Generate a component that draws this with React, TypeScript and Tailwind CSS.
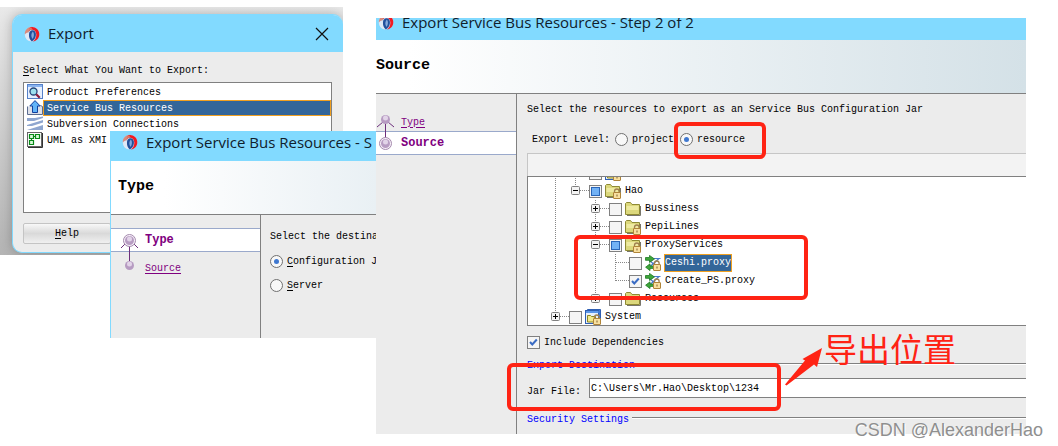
import { useState } from 'react';
import type { ReactNode } from 'react';
import clsx from 'clsx';

type IconName = 'folder' | 'lockedFolder' | 'project' | 'proxy';

interface TreeRow {
  label: string;
  // one entry per indent column: draw the dotted guide or leave it blank
  guides: boolean[];
  toggle?: 'plus' | 'minus';
  last?: boolean;
  check: 'off' | 'on' | 'partial';
  icon: IconName;
  selected?: boolean;
}

const rows: TreeRow[] = [
  { label: '\u00a0\u00a0_', guides: [true], check: 'off', icon: 'project' },
  { label: 'Hao', guides: [true], toggle: 'minus', last: true, check: 'partial', icon: 'lockedFolder' },
  { label: 'Bussiness', guides: [true, false], toggle: 'plus', check: 'off', icon: 'folder' },
  { label: 'PepiLines', guides: [true, false], toggle: 'plus', check: 'off', icon: 'lockedFolder' },
  { label: 'ProxyServices', guides: [true, false], toggle: 'minus', check: 'partial', icon: 'lockedFolder' },
  { label: 'Ceshi.proxy', guides: [true, false, true], check: 'off', icon: 'proxy', selected: true },
  { label: 'Create_PS.proxy', guides: [true, false, true], last: true, check: 'on', icon: 'proxy' },
  { label: 'Resources', guides: [true, false], toggle: 'plus', last: true, check: 'off', icon: 'folder' },
  { label: 'System', guides: [], toggle: 'plus', last: true, check: 'off', icon: 'project' },
];

const exportKinds = ['Product Preferences', 'Service Bus Resources', 'Subversion Connections', 'UML as XMI'];

function AppLogo() {
  return (
    <svg width="16" height="16" viewBox="0 0 16 16" className="shrink-0">
      <circle cx="8" cy="8.200" r="7.300" fill="#c9d8ee" />
      <path d="M.8 8.500C.6 4 4 .8 8.200.8L9 3C6.500 3.200 5.200 4.500 4.600 6.200 3 6.500 1.600 7.300.8 8.500Z" fill="#d98a7c" />
      <path d="M1 9C1.800 7.600 3.200 6.800 4.800 6.800 4.600 10 5.500 13 8 15.500 4 15.400 1.200 12.800 1 9Z" fill="#dfe9f6" />
      <path d="M5 8C5.300 5.200 7 4 9 4.300c2.200.4 3.200 2.500 2.900 5-.3 2.600-1.800 5-4 6.200C5.600 13.500 4.700 11 5 8Z" fill="#22509c" />
      <path d="M8.800 5.500c1.600 1.500 1.600 5.200-.3 7.500C6.800 10.600 7 7.500 8.800 5.500Z" fill="#86a9dc" />
      <path d="M7 1C11 .3 15.300 3.400 15.300 8.200c0 4-2.800 6.700-6.300 7.400 2.300-1.900 3.500-4.500 3.300-7.300C12.100 5.500 10.500 3.800 8 3.700 6.700 3.700 5.800 4.200 5 5 5 3.300 5.700 1.800 7 1Z" fill="#f01a22" />
      <path d="M7.200 1.300C5.500 2 4.600 3.500 4.600 5.400 5.600 4 7 3.500 8.600 3.700 8 2.800 7.500 2 7.200 1.300Z" fill="#dd7768" />
    </svg>
  );
}

function Lock() {
  return (
    <g>
      <path d="M9.500 10V8.300a2.300 2.300 0 0 1 4.600 0V10" fill="none" stroke="#a08050" strokeWidth="1.300" />
      <rect x="8.500" y="9.500" width="7" height="6" rx=".5" fill="#f8e0a0" stroke="#b08438" />
      <path d="M12 11.500v2" stroke="#80602a" />
    </g>
  );
}

function TreeIcon({ name }: { name: IconName }) {
  if (name === 'proxy') {
    return (
      <svg width="16" height="16" viewBox="0 0 16 16" className="shrink-0">
        <path d="M6 3.500h9.500M14 3.500 4 12.500M4 5l8 7" stroke="#4a78c8" strokeWidth="1.200" fill="none" />
        <path d="M.5 2.500h4V.4L9.500 4 4.500 7.400V5.300h-4Z" fill="#3fa53a" stroke="#1e7a22" strokeWidth=".8" />
        <path d="M8.500 11H5V8.800L.6 12.200 5 15.600v-2.200h3.500Z" fill="#3fa53a" stroke="#1e7a22" strokeWidth=".8" />
        <Lock />
      </svg>
    );
  }
  if (name === 'project') {
    return (
      <svg width="16" height="16" viewBox="0 0 16 16" className="shrink-0">
        <path d="M2.500 1.500V.5h13v13h-1" fill="#3d7ad6" stroke="#2f5fb3" />
        <rect x=".5" y="1.500" width="13" height="13" fill="#e6effc" stroke="#2f5fb3" />
        <path d="M1 2h12.500v2H1Z" fill="#5b96e8" />
        <path d="M2.500 6.500h3l1 1h4v5.500h-8Z" fill="#f2e98a" stroke="#8a8423" />
        <Lock />
      </svg>
    );
  }
  return (
    <svg width="16" height="16" viewBox="0 0 16 16" className="shrink-0">
      <path d="M15.500 5v9.500H2" stroke="#77756a" fill="none" />
      <path d="M.5 13.500V2.500l1-1h4l1.500 2h7.500v10Z" fill="#dcd87c" stroke="#8f8a35" />
      <path d="M1.500 5h12v4h-12Z" fill="#eeeaa0" />
      {name === 'lockedFolder' && <Lock />}
    </svg>
  );
}

function CheckBox({ id, state }: { id: string; state: 'off' | 'on' | 'partial' }) {
  const [checked, setChecked] = useState(state === 'on');
  return (
    <span className="grid size-[13px] shrink-0">
      <input
        id={id}
        type="checkbox"
        checked={checked}
        onChange={e => setChecked(e.target.checked)}
        className="col-start-1 row-start-1 size-[13px] appearance-none border border-[#808080] bg-[#f5f5f5]"
      />
      <svg viewBox="0 0 13 13" className="pointer-events-none col-start-1 row-start-1 size-[13px]">
        {checked && <path d="M3 6 5.300 8.500 9.800 3.500" fill="none" stroke="#3a6cc4" strokeWidth="2" />}
        {!checked && state === 'partial' && (
          <rect x="2.500" y="2.500" width="8" height="8" fill="#72b2f5" stroke="#2a66b8" />
        )}
      </svg>
    </span>
  );
}

function Radio({ name, label, mnemonic, on }: { name: string; label: string; mnemonic?: boolean; on?: boolean }) {
  return (
    <label className="flex items-center gap-1 whitespace-nowrap">
      <span className="grid size-[13px] shrink-0 place-items-center">
        <input
          type="radio"
          name={name}
          defaultChecked={on}
          className="peer col-start-1 row-start-1 size-[13px] appearance-none rounded-full border border-[#707070] bg-[#f8f8f8]"
        />
        <span className="pointer-events-none col-start-1 row-start-1 hidden size-[5px] rounded-full bg-[#3f78d0] peer-checked:block" />
      </span>
      {mnemonic ? <Mnemonic text={label} /> : <span>{label}</span>}
    </label>
  );
}

function Mnemonic({ text }: { text: string }) {
  return (
    <span>
      <span className="underline underline-offset-2">{text[0]}</span>
      {text.slice(1)}
    </span>
  );
}

function Branch({ toggle, last }: { toggle?: 'plus' | 'minus'; last?: boolean }) {
  return (
    <svg width="20" height="18" viewBox="0 0 20 18" className="mr-1 shrink-0 overflow-visible">
      <path d={last ? 'M10.500 0V9' : 'M10.500 0V18'} stroke="#888" strokeDasharray="1 1" />
      <path d="M11 8.500H24" stroke="#888" strokeDasharray="1 1" />
      {toggle && (
        <g>
          <rect x="6.500" y="4.500" width="8" height="8" rx="1" fill="#f4f4f4" stroke="#808080" />
          <path d={toggle === 'plus' ? 'M8 8.500h5M10.500 6v5' : 'M8 8.500h5'} stroke="#000" />
        </g>
      )}
    </svg>
  );
}

function ResourceTree() {
  return (
    <div className="h-[150px] overflow-hidden border border-r-0 border-[#808080] bg-white">
      <ul className="-mt-[13px] pl-[17px]">
        {rows.map((row, i) => (
          <li key={i} className="flex h-[18px] items-center">
            {row.guides.map((line, col) => (
              <svg key={col} width="20" height="18" className="shrink-0">
                {line && <path d="M10.500 0V18" stroke="#888" strokeDasharray="1 1" />}
              </svg>
            ))}
            <Branch toggle={row.toggle} last={row.last} />
            <CheckBox id={`node-${i}`} state={row.check} />
            <span className="ml-[3px] flex">
              <TreeIcon name={row.icon} />
            </span>
            <label
              htmlFor={`node-${i}`}
              className={clsx(
                'ml-[3px] border leading-4',
                row.selected ? 'border-[#f0a020] bg-[#336699] text-white' : 'border-transparent',
              )}
            >
              {row.label}
            </label>
          </li>
        ))}
      </ul>
    </div>
  );
}

function KindIcon({ index }: { index: number }) {
  return (
    <svg width="16" height="16" viewBox="0 0 16 16" className="shrink-0">
      {index === 0 && (
        <g>
          <rect x=".5" y=".5" width="15" height="14" fill="#e6f0ff" stroke="#5580c8" />
          <path d="M1 2h14" stroke="#8ab4f0" strokeWidth="2" />
          <circle cx="6.500" cy="7.500" r="3.500" fill="#9de0ee" stroke="#27467a" strokeWidth="1.300" />
          <path d="m9.200 10.200 3.500 3.500" stroke="#8c1c3c" strokeWidth="2.200" />
        </g>
      )}
      {index === 1 && (
        <g>
          <path d="M.5 6.500V14.500h15V6.500l-2-1" fill="#dde0e8" stroke="#5b6c90" />
          <path d="M8 .6 13.200 6H10.500v6.500h-5V6H2.800Z" fill="#62b4f8" stroke="#123f9c" />
        </g>
      )}
      {index === 2 && (
        <g fill="#8fa6cf">
          <path d="M0 2h8l8-1.500V2L7 5H0Z" />
          <path d="m0 9 16-5v2.500L5 10H0Z" />
          <path d="m0 14 16-5v5H0Z" />
        </g>
      )}
      {index === 3 && (
        <g>
          <rect x=".5" y=".5" width="14" height="14" fill="#fff" stroke="#666" />
          <path d="M15.500 1v14.500H1" fill="none" stroke="#333" />
          <path d="M2.500 2.500h4v4h-4ZM8.500 2.500h4v4h-4ZM2.500 8.500h4v4h-4ZM6.500 4.500h2M4.500 6.500v2" fill="#d9f7d9" stroke="#078a16" strokeWidth="1.200" />
        </g>
      )}
    </svg>
  );
}

function Ball({ x, y, ring }: { x: number; y: number; ring?: boolean }) {
  return (
    <g>
      {ring && <circle cx={x} cy={y} r="6" fill="#f6f0f8" stroke="#a58aae" />}
      <circle cx={x} cy={y} r="4.500" fill="#b79cc2" />
      <circle cx={x} cy={y - 1.5} r="2.500" fill="#e2d4e8" />
    </g>
  );
}

function TitleBar({ children }: { children: ReactNode }) {
  return (
    <div className="flex items-center gap-2 whitespace-nowrap font-['Open_Sans','Noto_Sans',sans-serif] text-[15px] text-[#10202c]">
      <AppLogo />
      <span>{children}</span>
    </div>
  );
}

const stepLink = 'text-[#800080] underline underline-offset-2';
const stepCurrent = 'text-xs font-bold text-[#800080]';

function ExportDialog() {
  const [kind, setKind] = useState(1);
  return (
    <section className="mt-[7px] h-[248px] w-[343px] overflow-hidden bg-linear-to-b from-[#e9e9e9] to-[#b4b4b4] pt-[7px] pl-3">
      <div className="h-[239px] overflow-hidden rounded-t-[10px] rounded-bl-[10px] border border-r-0 border-[#82daff] bg-[#ececec] shadow-[0_0_12px_rgba(0,0,0,0.25)]">
        <header className="flex h-[37px] items-center justify-between bg-[#82daff] pr-3.5 pl-[11px]">
          <TitleBar>Export</TitleBar>
          <button aria-label="Close">
            <svg width="14" height="14" viewBox="0 0 14 14">
              <path d="m1 1 12 12M13 1 1 13" stroke="#111" strokeWidth="1.200" />
            </svg>
          </button>
        </header>
        <div className="pt-[11px] pr-[11px] pl-2.5">
          <p className="h-4 leading-4">
            <Mnemonic text="Select What You Want to Export:" />
          </p>
          <ul className="mt-[3px] h-[131px] border border-[#808080] bg-white pt-px pl-[3px]">
            {exportKinds.map((label, i) => (
              <li key={label} className="flex h-4 items-center">
                <KindIcon index={i} />
                <button
                  onClick={() => setKind(i)}
                  className={clsx(
                    'h-4 flex-1 border pl-[3px] text-left leading-4',
                    kind === i ? 'border-[#f0a020] bg-[#336699] text-white' : 'border-transparent',
                  )}
                >
                  {label}
                </button>
              </li>
            ))}
          </ul>
          <button className="mt-2.5 h-[21px] w-[88px] rounded-xs border border-[#c4c4c4] bg-linear-to-b from-[#f8f8f8] via-[#d9d9d9] to-[#f0f0f0]">
            <Mnemonic text="Help" />
          </button>
        </div>
      </div>
    </section>
  );
}

function TypeStep() {
  return (
    <section className="absolute top-[131px] right-0 flex h-[207px] w-[266px] flex-col overflow-hidden border-l border-[#82daff] bg-[#ececec]">
      <header className="flex h-[30px] shrink-0 items-start bg-[#82daff] pl-[11px]">
        <div className="flex h-[22px] items-center">
          <TitleBar>Export Service Bus Resources - S</TitleBar>
        </div>
      </header>
      <div className="flex h-[54px] shrink-0 items-center border-b border-[#808080] bg-linear-to-r from-white from-20% to-[#e9f0f4] pl-[7px]">
        <h2 className="text-[15px] font-bold">Type</h2>
      </div>
      <div className="flex flex-1">
        <nav className="relative w-[150px] shrink-0 border-r border-[#808080] pt-[13px]">
          <div className="flex h-6 items-center border-y border-[#9aa9cb] bg-white pl-[34px]">
            <a href="#type" className={stepCurrent}>Type</a>
          </div>
          <div className="flex h-8 items-center pl-[34px]">
            <a href="#source" className={stepLink}>Source</a>
          </div>
          <svg width="20" height="40" viewBox="0 0 20 40" className="pointer-events-none absolute top-[17px] left-2">
            <path d="m2 16 5-5M19 16l-5-5M10.500 12V30" stroke="#6d2f7c" fill="none" />
            <Ball x={10.5} y={8.5} ring />
            <Ball x={10.5} y={33.5} />
          </svg>
        </nav>
        <div className="flex flex-col gap-[9px] pt-3.5 pl-[9px]">
          <p className="h-4 leading-4 whitespace-nowrap">Select the destina</p>
          <Radio name="destination" label="Configuration J" mnemonic on />
          <Radio name="destination" label="Server" mnemonic />
        </div>
      </div>
    </section>
  );
}

function GroupTitle({ children }: { children: ReactNode }) {
  return (
    <div className="flex h-4 gap-[3px]">
      <h3 className="leading-4 whitespace-nowrap text-[#0000ff]">{children}</h3>
      <span className="mt-[5px] h-0.5 flex-1 border-t border-b border-t-[#808080] border-b-white" />
    </div>
  );
}

function Annotations() {
  return (
    <div className="pointer-events-none absolute inset-0">
      <div className="absolute top-[104px] left-[298px] h-[37px] w-[92px] rounded-md border-4 border-[#ff2314]" />
      <div className="absolute top-[217px] left-[198px] h-[65px] w-[234px] rounded-md border-4 border-[#ff2314]" />
      <div className="absolute top-[345px] left-[131px] h-[48px] w-[274px] rounded-md border-4 border-[#ff2314]" />
      <svg width="40" height="40" viewBox="0 0 40 40" className="absolute top-[329px] left-[408px]">
        <path d="M1 37.500 21 13.500 18.500 12 38 1 33 20 30 17.500 2.500 38.500Z" fill="#ff2314" />
      </svg>
      <p className="absolute top-[310px] left-[448px] font-['Noto_Sans_CJK_SC',sans-serif] text-[33px] leading-10 whitespace-nowrap text-[#ff2314]">
        导出位置
      </p>
    </div>
  );
}

function SourceStep() {
  const [jar, setJar] = useState('C:\\Users\\Mr.Hao\\Desktop\\1234');
  return (
    <section className="relative mt-[18px] mr-8 flex min-w-0 flex-1 flex-col self-start bg-[#ececec]">
      <header className="h-[22px] overflow-hidden bg-[#82daff]">
        <div className="-mt-3 flex h-8 items-center pl-0.5">
          <TitleBar>Export Service Bus Resources - Step 2 of 2</TitleBar>
        </div>
      </header>
      <div className="flex h-[54px] items-center border-b border-[#808080] bg-linear-to-r from-white from-5% to-[#d4e1e7]">
        <h2 className="text-[15px] font-bold">Source</h2>
      </div>
      <div className="flex">
        <nav className="relative w-[141px] shrink-0 border-r border-[#808080] pt-[19px]">
          <div className="flex h-[18px] items-center pl-[25px]">
            <a href="#type" className={stepLink}>Type</a>
          </div>
          <div className="flex h-6 items-center border-y border-[#9aa9cb] bg-white pl-[25px]">
            <a href="#source" className={stepCurrent}>Source</a>
          </div>
          <svg width="20" height="40" viewBox="0 0 20 40" className="pointer-events-none absolute top-[19px] left-0">
            <path d="m1 14 6-5M18 14l-6-5M9.500 10V26" stroke="#6d2f7c" fill="none" />
            <Ball x={9.5} y={6.5} />
            <Ball x={9.5} y={30.5} ring />
          </svg>
        </nav>
        <div className="min-w-0 flex-1 pt-2 pb-1.5 pl-2.5">
          <p className="h-4 leading-4">Select the resources to export as an Service Bus Configuration Jar</p>
          <div className="mt-[11px] flex h-5 items-center pl-[5px]">
            <span className="mr-[5px]">Export Level:</span>
            <Radio name="level" label="project" />
            <span className="ml-1.5">
              <Radio name="level" label="resource" on />
            </span>
          </div>
          <div className="mt-1 h-[23px] border-t border-l border-[#c6c6c6] bg-[#f3f3f3]" />
          <ResourceTree />
          <div className="mt-2 flex h-4 items-center gap-1">
            <CheckBox id="deps" state="on" />
            <label htmlFor="deps">Include Dependencies</label>
          </div>
          <div className="mt-2">
            <GroupTitle>Export Destination</GroupTitle>
          </div>
          <div className="mt-1 flex h-5">
            <label htmlFor="jar" className="w-[62px] shrink-0 pt-1.5">Jar File:</label>
            <input
              id="jar"
              value={jar}
              onChange={e => setJar(e.target.value)}
              className="min-w-0 flex-1 border border-r-0 border-[#808080] bg-white pl-px"
            />
          </div>
          <div className="mt-3.5">
            <GroupTitle>Security Settings</GroupTitle>
          </div>
        </div>
      </div>
      <Annotations />
    </section>
  );
}

export default function App() {
  return (
    <main className="relative flex min-h-[446px] bg-white font-['Liberation_Mono',monospace] text-[10px] text-black">
      <div className="relative w-[376px] shrink-0">
        <ExportDialog />
        <TypeStep />
      </div>
      <SourceStep />
      <p className="absolute right-[15px] bottom-1 font-['Liberation_Sans',sans-serif] text-lg leading-6 text-[#8f8f8f] [text-shadow:1px_1px_0_#fff]">
        CSDN @AlexanderHao
      </p>
    </main>
  );
}
